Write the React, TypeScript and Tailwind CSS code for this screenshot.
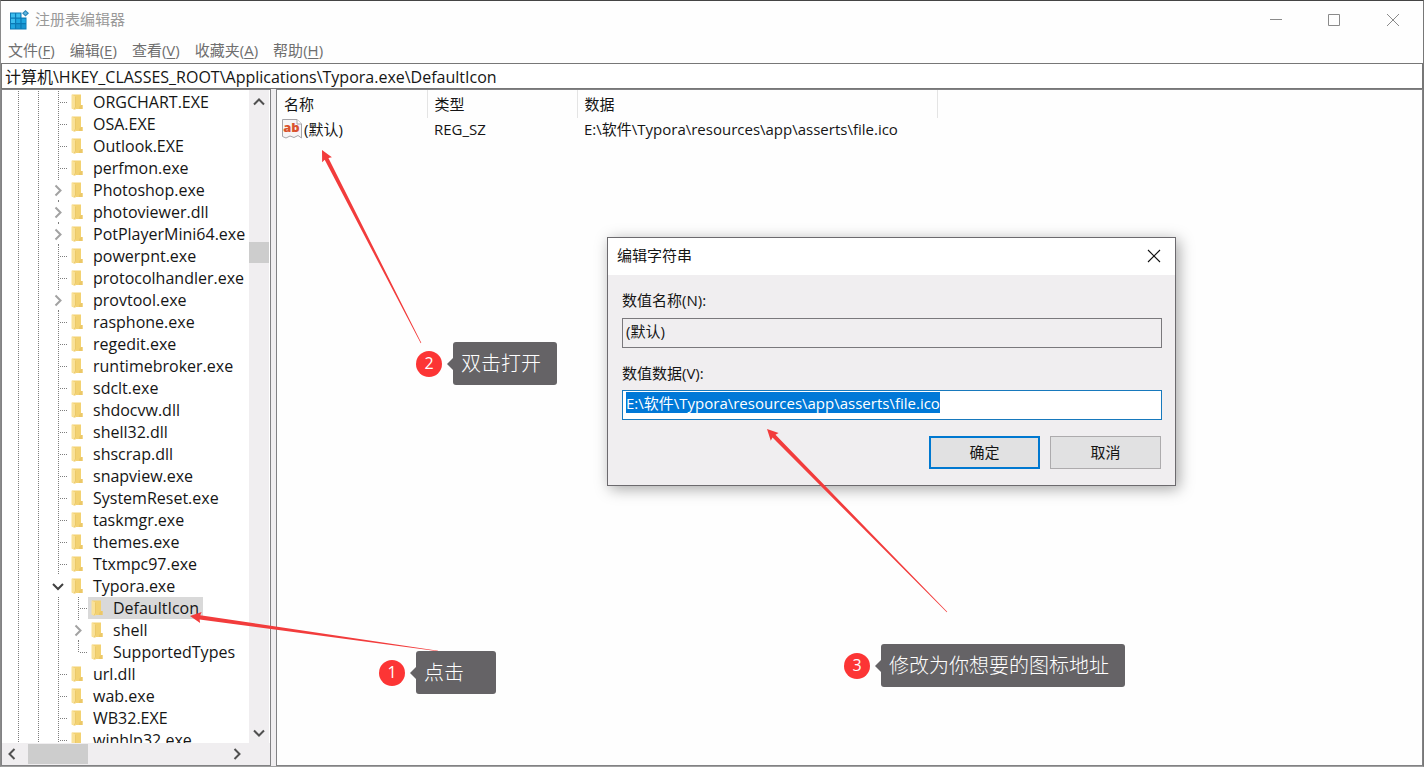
import React, { useEffect, useRef } from 'react';

type Branch = 'line' | 'tee' | 'end' | 'closed' | 'open';

interface Node {
  name: string;
  branch: Branch;
  level?: number;
  selected?: boolean;
}

const nodes: Node[] = [
  { name: 'ORGCHART.EXE', branch: 'tee' },
  { name: 'OSA.EXE', branch: 'tee' },
  { name: 'Outlook.EXE', branch: 'tee' },
  { name: 'perfmon.exe', branch: 'tee' },
  { name: 'Photoshop.exe', branch: 'closed' },
  { name: 'photoviewer.dll', branch: 'closed' },
  { name: 'PotPlayerMini64.exe', branch: 'closed' },
  { name: 'powerpnt.exe', branch: 'tee' },
  { name: 'protocolhandler.exe', branch: 'tee' },
  { name: 'provtool.exe', branch: 'closed' },
  { name: 'rasphone.exe', branch: 'tee' },
  { name: 'regedit.exe', branch: 'tee' },
  { name: 'runtimebroker.exe', branch: 'tee' },
  { name: 'sdclt.exe', branch: 'tee' },
  { name: 'shdocvw.dll', branch: 'tee' },
  { name: 'shell32.dll', branch: 'tee' },
  { name: 'shscrap.dll', branch: 'tee' },
  { name: 'snapview.exe', branch: 'tee' },
  { name: 'SystemReset.exe', branch: 'tee' },
  { name: 'taskmgr.exe', branch: 'tee' },
  { name: 'themes.exe', branch: 'tee' },
  { name: 'Ttxmpc97.exe', branch: 'tee' },
  { name: 'Typora.exe', branch: 'open' },
  { name: 'DefaultIcon', branch: 'tee', level: 1, selected: true },
  { name: 'shell', branch: 'closed', level: 1 },
  { name: 'SupportedTypes', branch: 'end', level: 1 },
  { name: 'url.dll', branch: 'tee' },
  { name: 'wab.exe', branch: 'tee' },
  { name: 'WB32.EXE', branch: 'tee' },
  { name: 'winhlp32.exe', branch: 'tee' },
];

const menus = [
  ['文件', 'F'],
  ['编辑', 'E'],
  ['查看', 'V'],
  ['收藏夹', 'A'],
  ['帮助', 'H'],
];

function BranchCell({ kind }: { kind: Branch }) {
  const dots = { stroke: '#7d7d7d', strokeDasharray: '1 1', fill: 'none' };
  return (
    <svg className="h-[22px] w-5 shrink-0" viewBox="0 0 20 22" aria-hidden="true">
      {(kind === 'line' || kind === 'tee') && <path d="M10.5 0V22" {...dots} />}
      {kind === 'end' && <path d="M10.5 0V12" {...dots} />}
      {(kind === 'tee' || kind === 'end') && <path d="M12 11.5H19" {...dots} />}
      {kind === 'closed' && (
        <>
          <path d="M10.5 0V1M10.5 21V22" stroke="#7d7d7d" />
          <path d="M7.5 6.5L12.5 11.5L7.5 16.5" fill="none" stroke="#a2a2a2" strokeWidth="2" />
        </>
      )}
      {kind === 'open' && <path d="M5 9L10 14L15 9" fill="none" stroke="#404040" strokeWidth="2" />}
    </svg>
  );
}

function Folder() {
  return (
    <svg className="h-4 w-3 shrink-0" viewBox="0 0 12 16" aria-hidden="true">
      <path d="M1 0.5H10V11H11.5V15H1Z" fill="#f3d272" />
      <path d="M10 11H11.5V15H8V13Z" fill="#ecc868" />
      <path d="M0.5 0.5L4.5 2.5V16L0.5 14.5Z" fill="#f9e198" />
      <path d="M4.5 2.5V13L3 15.5" fill="none" stroke="#e9c463" strokeWidth="0.8" />
    </svg>
  );
}

function Chevron({ d }: { d: string }) {
  return (
    <svg className="size-5" viewBox="0 0 20 20" aria-hidden="true">
      <path d={d} fill="none" stroke="#505050" strokeWidth="2" />
    </svg>
  );
}

function RegistryLogo() {
  return (
    <svg className="size-5" viewBox="0 0 20 20" aria-hidden="true">
      <path d="M1 2.5H12.5V7.5H17.5V19.5H1Z" fill="#0b79b5" />
      <path d="M2 3.5H6V7.5H2ZM7.2 3.5H11.4V7.5H7.2ZM2 8.7H6V13H2Z" fill="#3cbdee" />
      <path d="M7.2 8.7H11.4V13H7.2ZM12.6 8.7H16.7V13H12.6ZM2 14.2H6V18.5H2Z" fill="#1fa6e0" />
      <path d="M7.2 14.2H11.4V18.5H7.2ZM12.6 14.2H16.7V18.5H12.6Z" fill="#1894d0" />
      <path d="M16.5 0L20 3.3L16.5 6.6L13 3.3Z" fill="#2a86b8" />
      <path d="M16.5 1.5L18.4 3.3L16.5 5.1L14.6 3.3Z" fill="#5fb4de" />
    </svg>
  );
}

function StringValueIcon() {
  return (
    <svg className="h-5 w-5 shrink-0" viewBox="0 0 20 20" aria-hidden="true">
      <path d="M0.5 0.5H15L19.5 5V19L16 16.5L12 18.5L8 17L4 19L0.5 17.5Z" fill="#f7f5f6" stroke="#a6a4a8" />
      <path d="M15 0.5V5H19.5" fill="#fff" stroke="#a6a4a8" />
      <text x="9.5" y="13" textAnchor="middle" fontSize="13" fontWeight="800" fontFamily="Open Sans" fill="#d9532f">
        ab
      </text>
    </svg>
  );
}

function Arrow({ from, to }: { from: [number, number]; to: [number, number] }) {
  const dx = to[0] - from[0];
  const dy = to[1] - from[1];
  const len = Math.hypot(dx, dy);
  const angle = (Math.atan2(dy, dx) * 180) / Math.PI;
  const neck = len - 10;
  return (
    <g transform={`translate(${from[0]} ${from[1]}) rotate(${angle})`}>
      <path d={`M0 -0.3L${neck} -2.1L${neck - 1} -5.5L${len} 0L${neck - 1} 5.5L${neck} 2.1L0 0.3Z`} fill="#f23c3c" />
    </g>
  );
}

function Callout({ step, text, className }: { step: number; text: string; className: string }) {
  return (
    <div className={`absolute z-20 flex items-center ${className}`}>
      <span className="flex size-[26px] shrink-0 items-center justify-center rounded-full bg-[#fc3535] pb-0.5 text-base text-white">
        {step}
      </span>
      <svg className="ml-[5px] h-3 w-1.5 shrink-0" viewBox="0 0 6 12" aria-hidden="true">
        <path d="M6 0V12L0 6Z" fill="#656366" />
      </svg>
      <span className="flex h-[43px] flex-1 items-center rounded-[3px] bg-[#656366] px-2 text-xl font-light whitespace-nowrap text-white">
        {text}
      </span>
    </div>
  );
}

function EditDialog() {
  const field = useRef<HTMLInputElement>(null);
  useEffect(() => {
    field.current?.focus();
    field.current?.select();
  }, []);
  return (
    <section
      role="dialog"
      aria-labelledby="dialog-title"
      className="absolute top-[236px] left-[606px] z-10 w-[569px] border border-[#6c6a6e] bg-[#f0eef0] pb-4 shadow-[3px_3px_14px_rgba(0,0,0,0.35)]"
    >
      <header className="flex h-[37px] items-center justify-between bg-white pr-3.5 pb-0.5 pl-[9px]">
        <h2 id="dialog-title">编辑字符串</h2>
        <button type="button" aria-label="关闭">
          <svg className="size-3.5" viewBox="0 0 14 14" aria-hidden="true">
            <path d="M1 1L13 13M13 1L1 13" stroke="#111" strokeWidth="1.1" />
          </svg>
        </button>
      </header>
      <form className="pt-[15px] pr-[13px] pl-3.5" onSubmit={(e) => e.preventDefault()}>
        <label htmlFor="value-name" className="block leading-5">
          数值名称(N):
        </label>
        <input
          id="value-name"
          readOnly
          defaultValue="(默认)"
          className="mt-2 block h-[30px] w-full border border-[#7a787c] bg-transparent px-[3px] pb-1.5 leading-5 outline-none"
        />
        <label htmlFor="value-data" className="mt-[15px] block leading-5">
          数值数据(V):
        </label>
        <input
          id="value-data"
          ref={field}
          defaultValue="E:\软件\Typora\resources\app\asserts\file.ico"
          className="mt-[7px] block h-[30px] w-full border border-[#1779bd] bg-white px-[3px] pb-1.5 leading-5 outline-none selection:bg-[#0078d7] selection:text-white"
        />
        <div className="mt-4 flex justify-end gap-2.5 pr-px">
          <button type="submit" className="h-[33px] w-[111px] border-2 border-[#0078d0] bg-[#e1e1e2]">
            确定
          </button>
          <button type="button" className="h-[33px] w-[111px] border border-[#adabad] bg-[#e1e1e2]">
            取消
          </button>
        </div>
      </form>
    </section>
  );
}

export default function App() {
  return (
    <main className="relative flex h-screen flex-col overflow-hidden border border-t-[#444] border-r-[#777] border-b-[#a0a0a0] border-l-[#8a8a8a] bg-[#fefefe] font-['Open_Sans','Noto_Sans_CJK_SC',sans-serif] text-[15px] text-[#151515]">
      <header className="flex h-[37px] shrink-0 items-center justify-between pl-2">
        <div className="flex items-center gap-1.5 text-[#999]">
          <RegistryLogo />
          <h1>注册表编辑器</h1>
        </div>
        <div className="flex text-[#8a8a8a]">
          <button type="button" aria-label="最小化" className="flex w-[58px] justify-center">
            <svg className="size-3.5" viewBox="0 0 14 14"><path d="M1 6.5H13" stroke="currentColor" /></svg>
          </button>
          <button type="button" aria-label="最大化" className="flex w-[58px] justify-center">
            <svg className="size-3.5" viewBox="0 0 14 14"><path d="M1.5 1.5H12.5V12.5H1.5Z" fill="none" stroke="currentColor" /></svg>
          </button>
          <button type="button" aria-label="关闭" className="flex w-[60px] justify-center">
            <svg className="size-3.5" viewBox="0 0 14 14"><path d="M1 1L13 13M13 1L1 13" stroke="currentColor" /></svg>
          </button>
        </div>
      </header>
      <nav className="flex h-[25px] shrink-0 items-center gap-[15px] pl-[7px] text-[#6f6f6f]">
        {menus.map(([label, key]) => (
          <button type="button" key={key}>
            {label}(<u className="underline-offset-2">{key}</u>)
          </button>
        ))}
      </nav>
      <input
        aria-label="地址"
        defaultValue="计算机\HKEY_CLASSES_ROOT\Applications\Typora.exe\DefaultIcon"
        className="h-[26px] shrink-0 border border-[#777] bg-white px-[3px] text-base leading-5 outline-none"
      />
      <div className="flex min-h-0 flex-1 gap-[5px] bg-[#f0eef0]">
        <aside className="flex w-[270px] shrink-0 flex-col border border-[#828284] bg-white">
          <div className="flex min-h-0 flex-1">
            <ul role="tree" aria-label="注册表项" className="min-w-0 flex-1 overflow-hidden pt-px pl-1.5 text-base">
              {nodes.map((n) => (
                <li key={n.name} role="treeitem" aria-selected={!!n.selected} className="flex h-[22px]">
                  <BranchCell kind="line" />
                  <BranchCell kind="line" />
                  {n.level === 1 && <BranchCell kind="line" />}
                  <BranchCell kind={n.branch} />
                  <button
                    type="button"
                    className={`flex items-center gap-2.5 pr-1 pl-[3px] leading-5 whitespace-nowrap ${n.selected ? 'bg-[#d9d9d9]' : ''}`}
                  >
                    <Folder />
                    {n.name}
                  </button>
                </li>
              ))}
            </ul>
            <div className="mr-px flex w-5 flex-col items-center bg-[#f0eef0] pt-0.5">
              <Chevron d="M5 12.5L10 7.5L15 12.5" />
              <div className="mt-[130px] h-[21px] w-full bg-[#cdcdcd]" />
              <div className="flex-1" />
              <Chevron d="M5 7.5L10 12.5L15 7.5" />
            </div>
          </div>
          <div className="flex h-[22px] items-center bg-[#f0eef0]">
            <Chevron d="M12.5 5L7.5 10L12.5 15" />
            <div className="ml-1.5 h-5 w-[60px] bg-[#cdcdcd]" />
            <div className="flex-1" />
            <div className="pr-[23px]">
              <Chevron d="M7.5 5L12.5 10L7.5 15" />
            </div>
          </div>
        </aside>
        <section className="min-w-0 flex-1 border border-[#828284] bg-[#fefefe]">
          <table className="w-[660px] table-fixed text-left">
            <thead>
              <tr className="h-7">
                <th className="w-[150px] border-r border-[#e4e4e4] pl-[7px] font-normal">名称</th>
                <th className="w-[150px] border-r border-[#e4e4e4] pl-[7px] font-normal">类型</th>
                <th className="w-[360px] border-r border-[#e4e4e4] pl-[7px] font-normal">数据</th>
              </tr>
            </thead>
            <tbody>
              <tr className="h-[22px]">
                <td className="pl-[5px]">
                  <span className="flex items-center gap-0.5">
                    <StringValueIcon />
                    (默认)
                  </span>
                </td>
                <td className="pl-[7px]">REG_SZ</td>
                <td className="pl-[7px]">E:\软件\Typora\resources\app\asserts\file.ico</td>
              </tr>
            </tbody>
          </table>
        </section>
      </div>
      <EditDialog />
      <svg className="pointer-events-none absolute top-0 left-0 z-10 h-[767px] w-[1424px]" viewBox="1 1 1424 767" aria-hidden="true">
        <Arrow from={[438, 651]} to={[190, 616]} />
        <Arrow from={[421, 343]} to={[322, 150]} />
        <Arrow from={[947, 612]} to={[767, 429]} />
      </svg>
      <Callout step={1} text="点击" className="top-[650px] left-[378px] w-[117px]" />
      <Callout step={2} text="双击打开" className="top-[341px] left-[415px] w-[141px]" />
      <Callout step={3} text="修改为你想要的图标地址" className="top-[643px] left-[843px] w-[281px]" />
    </main>
  );
}
